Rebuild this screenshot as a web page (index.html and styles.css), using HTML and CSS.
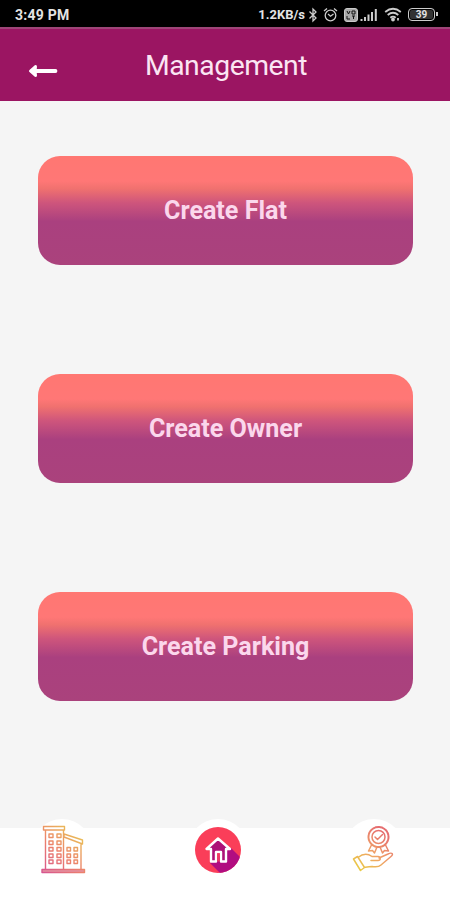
FILE: index.html
```html
<!DOCTYPE html>
<html lang="en">
<head>
<meta charset="utf-8">
<title>Management</title>
<link rel="stylesheet" href="styles.css">
</head>
<body>
<div class="screen">
  <div class="status">
    <span class="time">3:49 PM</span>
    <div class="indicators">
      <span class="speed">1.2KB/s</span>
      <svg class="bluetooth" width="10" height="16" viewBox="0 0 10 16"><path d="M1.5 4.5 8 11 5 14V2l3 3-6.500 6.500"/></svg>
      <svg class="alarm" width="15" height="16" viewBox="0 0 15 16"><circle cx="7.500" cy="8.500" r="5.300"/><path d="M1 4 4 1.500M14 4 11 1.500M5 7l2.500 2.200L10.500 7"/></svg>
      <svg class="volte" width="14" height="14" viewBox="0 0 14 14"><rect x=".5" y=".5" width="13" height="13" rx="2.500"/><path d="M3 3l1.500 3L6 3M8 3h3v3H8zM3 8v3h3M8 8h3M9.500 8v3"/></svg>
      <svg class="signal" width="18" height="14" viewBox="0 0 18 14"><path d="M1.500 11v2M5 9v4M8.500 6.500V13M12 4v9M15.800 1v12"/></svg>
      <svg class="wifi" width="18" height="15" viewBox="0 0 18 15"><path d="M1.200 5Q9-1.500 16.800 5M3.700 8Q9 3.500 14.300 8M6.300 10.700Q9 8.500 11.700 10.700"/><circle cx="9" cy="12.500" r="1"/><path d="M14 11v2.500"/></svg>
      <span class="battery">39</span>
    </div>
  </div>
  <header class="header">
    <svg class="back" width="30" height="16" viewBox="0 0 30 16"><path d="M27.500 8H4"/><path class="head" d="M7.500 3.500 2.500 8l5 4.500L7 8z"/></svg>
    <h1>Management</h1>
  </header>
  <main class="actions">
    <button class="flat">Create Flat</button>
    <button class="owner">Create Owner</button>
    <button class="parking">Create Parking</button>
  </main>
  <nav class="nav">
    <a class="tab">
      <svg width="60" height="60" viewBox="0 0 60 60">
        <defs><linearGradient id="tower" x1="10" y1="54" x2="46" y2="12" gradientUnits="userSpaceOnUse"><stop stop-color="#d65391"/><stop offset=".48" stop-color="#ec806d"/><stop offset="1" stop-color="#eac455"/></linearGradient></defs>
        <g fill="none" stroke="url(#tower)" stroke-width="1.400" stroke-linejoin="round">
          <path d="M11.500 7.500h21v3.500h-21zM13.500 11v39.500M31.500 11v39.500M32 15l18.500 6v4L32 18zM49 25v25.500"/>
          <path d="M10 50.500h42.500v3H10z" fill="#e490a1"/>
          <path d="M17 15h4v3.500h-4zM25 15h4v3.500h-4zM17 22h4v3.500h-4zM25 22h4v3.500h-4zM17 28.500h4V32h-4zM25 28.500h4V32h-4zM17 35h4v3.500h-4zM25 35h4v3.500h-4zM17 41h4v3.500h-4zM25 41h4v3.500h-4zM35 28.500h3.500V32H35zM42 28.500h3.500V32H42zM35 35h3.500v3.500H35zM42 35h3.500v3.500H42zM35 41h3.500v3.500H35zM42 41h3.500v3.500H42z"/>
        </g>
      </svg>
    </a>
    <a class="tab">
      <svg width="60" height="60" viewBox="0 0 60 60">
        <defs><clipPath id="disc"><circle cx="30" cy="31" r="23"/></clipPath></defs>
        <circle cx="30" cy="31" r="23" fill="#fa3e59"/>
        <path d="m43 29 14 14-18 18-17-17z" fill="#b10d80" clip-path="url(#disc)"/>
        <path d="M30 19.500 18.500 30h4.500v12.500h5V33h5v9.500h5V30h4z" fill="#ad1278" stroke="#fff" stroke-width="2.400" stroke-linejoin="round"/>
        <path d="M29.200 42.500v-8.300h2.600v8.300" fill="#ef3965"/>
      </svg>
    </a>
    <a class="tab">
      <svg width="60" height="60" viewBox="0 0 60 60">
        <defs><linearGradient id="award" x1="12" y1="50" x2="40" y2="14" gradientUnits="userSpaceOnUse"><stop stop-color="#e9cd45"/><stop offset=".5" stop-color="#efa266"/><stop offset="1" stop-color="#e66e70"/></linearGradient></defs>
        <g fill="none" stroke="url(#award)" stroke-width="1.500" stroke-linejoin="round" stroke-linecap="round">
          <circle cx="34.500" cy="18" r="10" stroke-width="2" stroke-dasharray="2.600 .8"/>
          <circle cx="34.500" cy="18" r="6.500"/>
          <path d="m31 18 2.500 2.500 5-5M27.500 26l-3 6 4-.5 2 2.500 2.500-6M41.500 26l3 6-4-.5-2 2.500-2.500-6"/>
          <path d="m9.500 40 4-2.500 7 11-4 3zM14 38.500c6-5 10-4 14-1h6c3 0 3 4 0 4h-7M35 39l9-4c4-2 6 0 3 2.500L37 46c-2 2-6 2-9 1.500-3 0-5 .5-7.500 1"/>
        </g>
      </svg>
    </a>
  </nav>
</div>
</body>
</html>
```
FILE: styles.css
```css
* { box-sizing: border-box; }

body {
  margin: 0;
  background: #fff;
  font-family: Roboto, sans-serif;
}

.screen {
  width: 450px;
  height: 900px;
  display: flex;
  flex-direction: column;
  overflow: hidden;
}

.status {
  height: 27px;
  flex: none;
  display: flex;
  align-items: center;
  justify-content: space-between;
  padding: 2px 12px 0 15px;
  background: #000;
  color: #e4e4e4;
  font-size: 14px;
  font-weight: 700;
}

.time { letter-spacing: 0.25px; }

.indicators {
  display: flex;
  align-items: center;
}

.indicators svg {
  display: block;
  fill: none;
  stroke: #ccc;
  stroke-width: 1.3;
}

.speed {
  margin-right: 3px;
  font-size: 13px;
}

.bluetooth { margin-right: 5px; }
.alarm { margin-right: 6px; }
.indicators .volte { stroke-width: 1; }
.volte rect { fill: #aaa; }
.volte path { stroke: #111; }
.signal { margin: 0 6px 0 2px; }
.indicators .signal { stroke-width: 2; }
.wifi { margin-right: 6px; }
.indicators .wifi { stroke-width: 1.8; }

.battery {
  position: relative;
  width: 27px;
  height: 13px;
  margin-right: 3px;
  border: 1.5px solid #ccc;
  border-radius: 4px;
  background: #333;
  box-shadow: inset 0 0 0 1px #000;
  font-size: 10px;
  line-height: 11px;
  text-align: center;
}

.battery::after {
  content: "";
  position: absolute;
  right: -4px;
  top: 3px;
  width: 2px;
  height: 4px;
  background: #ccc;
}

.header {
  height: 74px;
  flex: none;
  display: grid;
  grid-template-columns: 58px 1fr 56px;
  align-items: center;
  border-top: 2px solid #9d4577;
  background: #9b1562;
  color: #fbe5f3;
}

.back {
  margin: 11px 0 0 28px;
  fill: none;
  stroke: #fff;
  stroke-width: 3.8;
  stroke-linecap: round;
  stroke-linejoin: round;
}

.back .head {
  fill: #fff;
  stroke-width: 3;
}

.header h1 {
  margin: 2px 0 0;
  font-size: 28.3px;
  font-weight: 400;
  line-height: 34px;
  letter-spacing: -0.45px;
  text-align: center;
}

.actions {
  height: 727px;
  flex: none;
  display: flex;
  flex-direction: column;
  gap: 109px;
  padding: 54.5px 37px 0 38px;
  background: #f5f5f5;
}

.actions button {
  height: 109px;
  padding: 1px 0 0;
  border: 0;
  border-radius: 22px;
  background: linear-gradient(#ff7772 0%, #ff7776 23%, #f0716f 30%, #ce557c 43%, #aa407f 60%, #aa427c 100%);
  color: #fbd7ec;
  font: 700 25.1px/30px Roboto, sans-serif;
}

.nav {
  flex: 1;
  display: flex;
  gap: 96px;
  padding-left: 32px;
  background: #fff;
}

.tab {
  width: 60px;
  height: 60px;
  margin-top: -9px;
  border-radius: 50%;
  background: #fff;
}

.tab svg { display: block; }
```
